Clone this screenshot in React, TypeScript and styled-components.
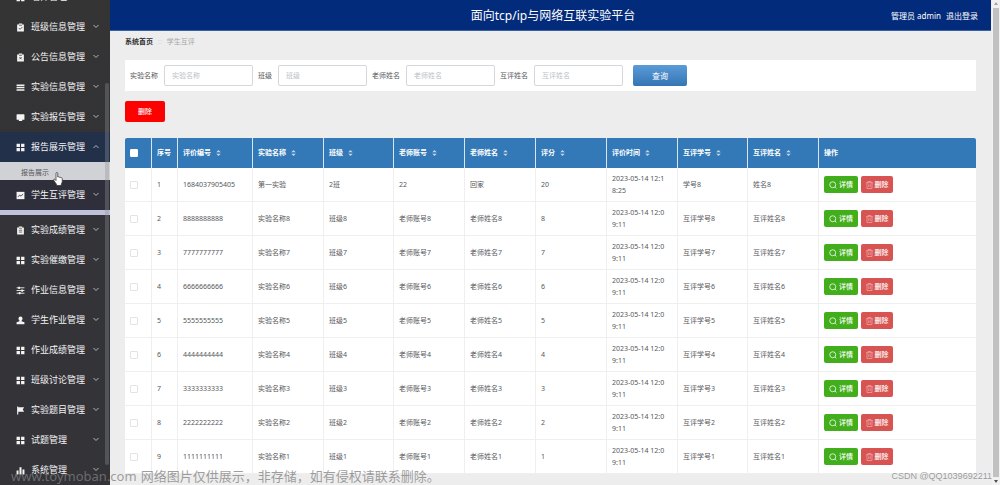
import React from 'react';
import styled, { createGlobalStyle, css } from 'styled-components';

const GlobalStyle = createGlobalStyle`
  *, *::before, *::after { box-sizing: border-box; }
  html, body { margin: 0; padding: 0; }
  body {
    font-family: "Noto Sans", "Noto Sans CJK SC", sans-serif;
    font-size: 7px;
    line-height: 12px;
    color: #56585c;
    background: #ededed;
  }
  button, input { font-family: inherit; }
`;

const Shell = styled.div`
  position: relative;
  display: flex;
  height: 100vh;
  overflow: hidden;
`;

/* ---------- sidebar ---------- */

const Sidebar = styled.nav`
  position: relative;
  flex: 0 0 110px;
  overflow: hidden;
  background: linear-gradient(#343434, #333338 40%);
`;

const Menu = styled.ul`
  list-style: none;
  margin: -18px 0 0;
  padding: 0;
`;

type Tone = 'plain' | 'open' | 'hover';

const MenuItem = styled.li<{ $tone: Tone }>`
  background: ${(p) => (p.$tone === 'open' ? '#22304a' : p.$tone === 'hover' ? '#2e2f3b' : 'transparent')};
  ${(p) =>
    p.$tone === 'hover' &&
    css`
      border-bottom: 5px solid #bfc1da;
    `}
`;

const MenuButton = styled.button`
  display: flex;
  align-items: center;
  gap: 6px;
  width: 100%;
  height: 30px;
  padding: 0 11px 0 16px;
  border: 0;
  background: none;
  color: #f4f4f4;
  font-size: 9px;
  line-height: 12px;
  text-align: left;
  cursor: pointer;
`;

const MenuLabel = styled.span`
  flex: 1;
  white-space: nowrap;
`;

const SubLink = styled.a`
  display: block;
  height: 18px;
  padding-left: 21px;
  background: #d1d2d5;
  color: #55565a;
  font-size: 7px;
  line-height: 22px;
  text-decoration: none;
`;

const SidebarThumb = styled.div`
  position: absolute;
  top: 83px;
  right: 1px;
  bottom: 20px;
  width: 4px;
  border-radius: 2px;
  background: rgba(144, 147, 153, 0.35);
`;

const Pointer = styled.svg`
  position: absolute;
  left: 53px;
  top: 172px;
`;

/* ---------- main ---------- */

const Main = styled.main`
  flex: 1;
  min-width: 0;
  display: flex;
  flex-direction: column;
`;

const Header = styled.header`
  display: grid;
  grid-template-columns: 1fr auto 1fr;
  align-items: center;
  height: 31px;
  margin-right: 1px;
  padding: 1px 13px 0 18px;
  border-bottom: 1px solid #3a62a0;
  background: #032b7c;
  color: #fff;
`;

const Title = styled.h1`
  grid-column: 2;
  margin: 0;
  font-size: 12px;
  font-weight: 400;
  line-height: 18px;
  white-space: nowrap;
`;

const UserArea = styled.div`
  display: flex;
  justify-content: flex-end;
  gap: 5px;
  font-size: 8px;
  line-height: 12px;
  white-space: nowrap;
`;

const LogoutLink = styled.a`
  color: inherit;
  text-decoration: none;
`;

const Content = styled.section`
  flex: 1;
  padding: 5px 16px 0 15px;
`;

const Crumbs = styled.ol`
  display: flex;
  gap: 5px;
  list-style: none;
  margin: 0;
  padding: 0;
  font-size: 7px;
  line-height: 12px;
`;

const Crumb = styled.li<{ $current?: boolean }>`
  color: ${(p) => (p.$current ? '#a3a5a9' : '#303133')};
  font-weight: ${(p) => (p.$current ? 400 : 700)};
`;

const CrumbMark = styled.li`
  color: #d3d5d9;
`;

const SearchForm = styled.form`
  display: flex;
  align-items: center;
  gap: 5px;
  height: 31px;
  margin-top: 12px;
  padding: 0 5px;
  background: #fff;
`;

const FieldLabel = styled.label<{ $short?: boolean }>`
  width: ${(p) => (p.$short ? 15 : 29)}px;
  white-space: nowrap;
`;

const FieldInput = styled.input`
  width: 89px;
  height: 21px;
  padding: 0 7px;
  border: 1px solid #d5d7dc;
  border-radius: 2px;
  background: #fff;
  font-size: 7px;
  color: #606266;
  &::placeholder {
    color: #bcbfc5;
    opacity: 1;
  }
`;

const SearchButton = styled.button`
  width: 54px;
  height: 21px;
  margin-left: 5px;
  padding: 0;
  border: 0;
  border-radius: 2px;
  background: linear-gradient(#5b9bd8, #3575b4);
  color: #fff;
  font-size: 8px;
  line-height: 12px;
`;

const BulkDelete = styled.button`
  display: block;
  width: 40px;
  height: 21px;
  margin: 10px 0 16px;
  padding: 0;
  border: 0;
  border-radius: 2px;
  background: #fe0000;
  color: #fff;
  font-size: 7px;
  font-weight: 500;
  line-height: 12px;
`;

/* ---------- table ---------- */

const Table = styled.table`
  width: 100%;
  table-layout: fixed;
  border-collapse: separate;
  border-spacing: 0;
  border-radius: 2px 2px 0 0;
  overflow: hidden;
  background: #fff;
`;

const Col = styled.col<{ $w?: number }>`
  width: ${(p) => (p.$w ? `${p.$w}px` : 'auto')};
`;

const HeadCell = styled.th`
  height: 30px;
  padding: 0 5px;
  border-right: 1px solid #d9e5f0;
  background: #3379b7;
  color: #fff;
  font-size: 7px;
  font-weight: 700;
  text-align: left;
  white-space: nowrap;
  &:last-child { border-right: 0; }
`;

const HeadInner = styled.span`
  display: flex;
  align-items: center;
  gap: 5px;
`;

const Cell = styled.td`
  height: 34px;
  padding: 0 10px 0 5px;
  border-right: 1px solid #efefef;
  border-bottom: 1px solid #efefef;
  line-height: 12px;
  word-break: break-all;
  &:last-child { border-right: 0; }
`;

const Tick = styled.input<{ $strong?: boolean }>`
  appearance: none;
  display: block;
  width: 8px;
  height: 8px;
  margin: 0;
  border: 1px solid ${(p) => (p.$strong ? '#fff' : '#e3e4e8')};
  border-radius: 1px;
  background: #fff;
`;

const Actions = styled.div`
  display: flex;
  gap: 3px;
`;

const ActionButton = styled.button<{ $danger?: boolean }>`
  display: flex;
  align-items: center;
  justify-content: center;
  gap: 2px;
  width: ${(p) => (p.$danger ? 32 : 34)}px;
  height: 17px;
  padding: 0;
  border: 0;
  border-radius: 2px;
  background: ${(p) => (p.$danger ? '#d75452' : '#43ae1b')};
  color: #fff;
  font-size: 7px;
  font-weight: 500;
  line-height: 12px;
  white-space: nowrap;
`;

/* ---------- page scrollbar and marks ---------- */

const PageScroll = styled.div`
  display: flex;
  flex-direction: column;
  align-items: center;
  flex: 0 0 8px;
  padding-right: 1px;
  background: #f1f1f1;
`;

const PageThumb = styled.div`
  flex: 1;
  width: 6px;
  background: #c1c1c1;
`;

const SiteMark = styled.p`
  position: absolute;
  left: 11px;
  bottom: 0;
  display: flex;
  gap: 4px;
  margin: 0;
  color: rgba(128, 128, 128, 0.75);
  font-size: 13px;
  line-height: 18px;
  white-space: nowrap;
`;

const AuthorMark = styled.p`
  position: absolute;
  right: 8px;
  bottom: 3px;
  margin: 0;
  color: #999;
  font-family: "Liberation Sans", sans-serif;
  font-size: 9px;
  line-height: 12px;
  text-shadow: 0 0 1px #fff;
`;

/* ---------- icons ---------- */

type IconName = 'grid' | 'claim' | 'release' | 'lines' | 'monitor' | 'chart' | 'order' | 'sliders' | 'person' | 'flag' | 'bars';

const ICONS: Record<IconName, React.ReactNode> = {
  grid: <path d="M1 1.5h6v5.5H1zM9 1.5h6v5.5H9zM1 9h6v5.5H1zM9 9h6v5.5H9z" />,
  claim: (
    <>
      <path d="M2 2.5h3V1h6v1.5h3V15H2z" />
      <path d="M5 9l2.3 2.3L11.5 7M5.5 4h5" fill="none" stroke="#343434" strokeWidth="1.4" />
    </>
  ),
  release: (
    <>
      <path d="M2 2.5h3V1h6v1.5h3V15H2z" />
      <path d="M6 7.2l4 4M10 7.2l-4 4M5.5 4h5" fill="none" stroke="#343434" strokeWidth="1.4" />
    </>
  ),
  lines: <path d="M1 2.5h14v2.8H1zM1 6.7h14v2.8H1zM1 10.9h14v2.8H1z" />,
  monitor: <path d="M2 2h12a1 1 0 0 1 1 1v8a1 1 0 0 1-1 1h-3v2H5v-2H2a1 1 0 0 1-1-1V3a1 1 0 0 1 1-1z" />,
  chart: (
    <>
      <path d="M1 1.5h14v13H1z" />
      <path d="M3.5 10.5l3-3.3 2.5 2 3.5-4" fill="none" stroke="#2e2f3b" strokeWidth="1.4" />
    </>
  ),
  order: (
    <>
      <path d="M2 2.5h3V1h6v1.5h3V15H2z" />
      <path d="M5 7.5h6M5 10.8h6M5.5 4h5" fill="none" stroke="#333338" strokeWidth="1.2" />
    </>
  ),
  sliders: (
    <>
      <path d="M1 3.2h14M1 8h14M1 12.8h14" fill="none" stroke="currentColor" strokeWidth="1.6" />
      <path d="M4 1.2h3v4H4zM9.5 6h3v4h-3zM5 10.8h3v4H5z" />
    </>
  ),
  person: <path d="M8 1a3.6 3.6 0 0 1 3.6 3.6c0 1.7-.8 2.9-1.8 3.7v1.2l5.2 1.8v3.2H1v-3.2l5.2-1.8V8.3C5.2 7.5 4.4 6.3 4.4 4.6A3.6 3.6 0 0 1 8 1z" />,
  flag: <path d="M2 1h2v1h10.5L12 6l2.5 4H4v5H2z" />,
  bars: <path d="M1 8h3.5v7H1zM6.2 2h3.6v13H6.2zM11.5 6H15v9h-3.5z" />,
};

const MenuIcon = ({ name }: { name: IconName }) => (
  <svg width="9" height="9" viewBox="0 0 16 16" fill="currentColor" aria-hidden="true">
    {ICONS[name]}
  </svg>
);

const Chevron = ({ up }: { up?: boolean }) => (
  <svg width="6" height="6" viewBox="0 0 12 12" fill="none" stroke="#c4c6ca" strokeWidth="1.8" aria-hidden="true">
    <path d={up ? 'M1 8l5-5 5 5' : 'M1 2l5 5 5-5'} />
  </svg>
);

const SortIcon = () => (
  <svg width="5" height="6" viewBox="0 0 10 12" fill="#c3d3e6" aria-hidden="true">
    <path d="M5 0l4.5 4.5h-9zM5 12L.5 7.5h9z" />
  </svg>
);

const SearchIcon = () => (
  <svg width="8" height="8" viewBox="0 0 16 16" fill="none" stroke="currentColor" strokeWidth="1.5" aria-hidden="true">
    <circle cx="7.5" cy="7.5" r="6" />
    <path d="M12 12l3 3" />
  </svg>
);

const TrashIcon = () => (
  <svg width="7" height="8" viewBox="0 0 14 16" fill="none" stroke="#f0b5b3" strokeWidth="1.3" aria-hidden="true">
    <path d="M0 3.5h14M4 3.5V1h6v2.5M2 3.5V15h10V3.5M5.5 6.5V12M8.5 6.5V12" />
  </svg>
);

const ArrowIcon = ({ down }: { down?: boolean }) => (
  <svg width="6" height="8" viewBox="0 0 6 8" fill={down ? '#505050' : '#a3a3a3'} aria-hidden="true">
    <path d={down ? 'M1 3h4L3 6z' : 'M1 5h4L3 2z'} />
  </svg>
);

/* ---------- data ---------- */

const MENU: { label: string; icon: IconName; tone?: Tone; child?: string }[] = [
  { label: '老师管理', icon: 'grid' },
  { label: '班级信息管理', icon: 'claim' },
  { label: '公告信息管理', icon: 'release' },
  { label: '实验信息管理', icon: 'lines' },
  { label: '实验报告管理', icon: 'monitor' },
  { label: '报告展示管理', icon: 'grid', tone: 'open', child: '报告展示' },
  { label: '学生互评管理', icon: 'chart', tone: 'hover' },
  { label: '实验成绩管理', icon: 'order' },
  { label: '实验催缴管理', icon: 'grid' },
  { label: '作业信息管理', icon: 'sliders' },
  { label: '学生作业管理', icon: 'person' },
  { label: '作业成绩管理', icon: 'grid' },
  { label: '班级讨论管理', icon: 'grid' },
  { label: '实验题目管理', icon: 'flag' },
  { label: '试题管理', icon: 'grid' },
  { label: '系统管理', icon: 'bars' },
];

const FIELDS = ['实验名称', '班级', '老师姓名', '互评姓名'];

const COLUMNS = ['评价编号', '实验名称', '班级', '老师账号', '老师姓名', '评分', '评价时间', '互评学号', '互评姓名'];

const WIDTHS = [27, 26, 75, 71, 70, 71, 71, 71, 71, 70, 71];

const ROWS: string[][] = [
  ['1684037905405', '第一实验', '2班', '22', '回家', '20', '2023-05-14 12:18:25', '学号8', '姓名8'],
  ...[8, 7, 6, 5, 4, 3, 2, 1].map((n) => [
    String(n).repeat(10),
    `实验名称${n}`,
    `班级${n}`,
    `老师账号${n}`,
    `老师姓名${n}`,
    String(n),
    '2023-05-14 12:09:11',
    `互评学号${n}`,
    `互评姓名${n}`,
  ]),
];

export default function App() {
  return (
    <>
      <GlobalStyle />
      <Shell>
        <Sidebar>
          <Menu>
            {MENU.map((m) => (
              <MenuItem key={m.label} $tone={m.tone ?? 'plain'}>
                <MenuButton type="button">
                  <MenuIcon name={m.icon} />
                  <MenuLabel>{m.label}</MenuLabel>
                  <Chevron up={m.tone === 'open'} />
                </MenuButton>
                {m.child && <SubLink href="#">{m.child}</SubLink>}
              </MenuItem>
            ))}
          </Menu>
          <SidebarThumb />
        </Sidebar>

        <Main>
          <Header>
            <Title>面向tcp/ip与网络互联实验平台</Title>
            <UserArea>
              <span>管理员 admin</span>
              <LogoutLink href="#">退出登录</LogoutLink>
            </UserArea>
          </Header>

          <Content>
            <Crumbs>
              <Crumb>系统首页</Crumb>
              <CrumbMark>::</CrumbMark>
              <Crumb $current>学生互评</Crumb>
            </Crumbs>

            <SearchForm onSubmit={(e) => e.preventDefault()}>
              {FIELDS.map((f, i) => (
                <React.Fragment key={f}>
                  <FieldLabel htmlFor={`field-${i}`} $short={f.length === 2}>
                    {f}
                  </FieldLabel>
                  <FieldInput id={`field-${i}`} type="text" placeholder={f} />
                </React.Fragment>
              ))}
              <SearchButton type="submit">查询</SearchButton>
            </SearchForm>

            <BulkDelete type="button">删除</BulkDelete>

            <Table>
              <colgroup>
                {WIDTHS.map((w, i) => (
                  <Col key={i} $w={w} />
                ))}
                <Col />
              </colgroup>
              <thead>
                <tr>
                  <HeadCell>
                    <Tick type="checkbox" aria-label="全选" $strong />
                  </HeadCell>
                  <HeadCell>序号</HeadCell>
                  {COLUMNS.map((c) => (
                    <HeadCell key={c}>
                      <HeadInner>
                        {c}
                        <SortIcon />
                      </HeadInner>
                    </HeadCell>
                  ))}
                  <HeadCell>操作</HeadCell>
                </tr>
              </thead>
              <tbody>
                {ROWS.map((row, i) => (
                  <tr key={row[0]}>
                    <Cell>
                      <Tick type="checkbox" aria-label={`选择 ${i + 1}`} />
                    </Cell>
                    <Cell>{i + 1}</Cell>
                    {row.map((v, j) => (
                      <Cell key={j}>{v}</Cell>
                    ))}
                    <Cell>
                      <Actions>
                        <ActionButton type="button">
                          <SearchIcon />
                          详情
                        </ActionButton>
                        <ActionButton type="button" $danger>
                          <TrashIcon />
                          删除
                        </ActionButton>
                      </Actions>
                    </Cell>
                  </tr>
                ))}
              </tbody>
            </Table>
          </Content>
        </Main>

        <PageScroll aria-hidden="true">
          <ArrowIcon />
          <PageThumb />
          <ArrowIcon down />
        </PageScroll>

        <Pointer width="10" height="14" viewBox="0 0 20 28" aria-hidden="true">
          <path
            d="M6 2.5C6 .5 9.5.5 9.5 2.5V10c1-1 3-.6 3.2.8 1-.8 2.8-.3 3 1 1.2-.5 2.8 0 2.8 1.7V19c0 2-1.5 4-2 5.5V27H7v-2.5C5 22 3 19.5 1.5 16.5c-.8-2 1.5-3 2.7-1.5L6 17z"
            fill="#fff"
            stroke="#333"
            strokeWidth="1.5"
          />
        </Pointer>

        <SiteMark>
          <span>www.toymoban.com</span>
          <span>网络图片仅供展示，非存储，如有侵权请联系删除。</span>
        </SiteMark>
        <AuthorMark>CSDN @QQ1039692211</AuthorMark>
      </Shell>
    </>
  );
}
